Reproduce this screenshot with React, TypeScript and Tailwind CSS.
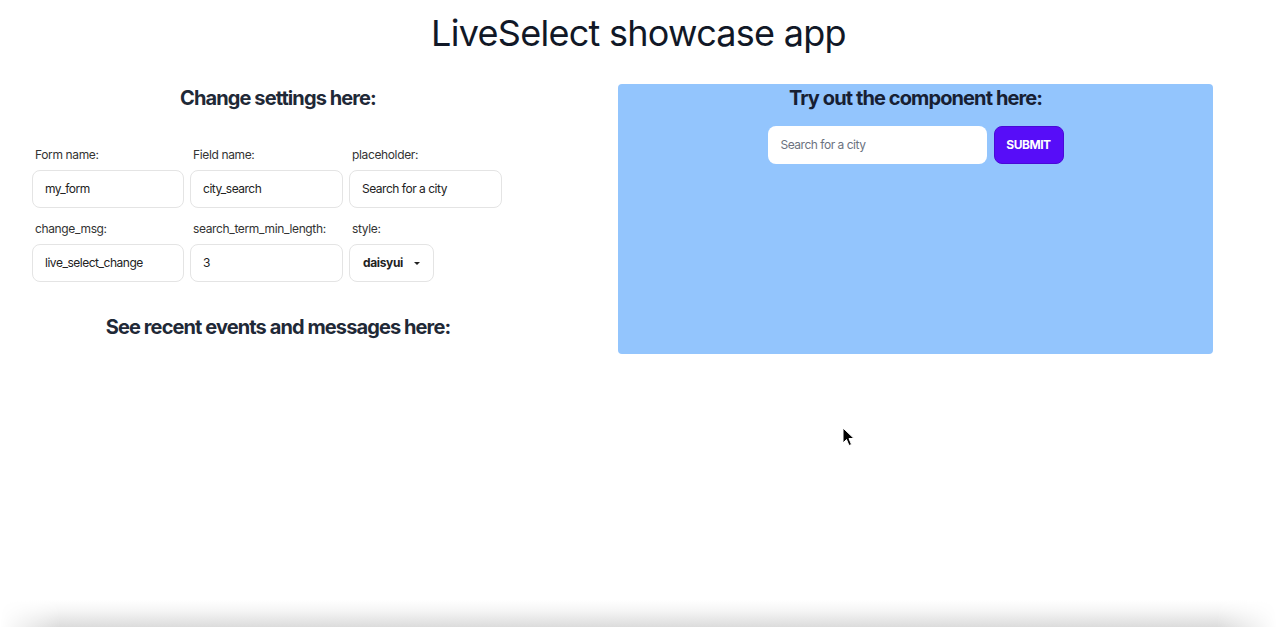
import React from "react";

function Field({ label, value, w }: { label: string; value: string; w: string }) {
  return (
    <div className={`flex flex-col ${w}`}>
      <label className="pl-[3px] text-xs leading-4 tracking-[-0.03em] text-[#333]">{label}</label>
      <div className="mt-[7px] flex h-[38px] items-center rounded-lg border border-[#e4e4e4] bg-white px-3 text-xs tracking-[-0.04em] text-[#222]">
        {value}
      </div>
    </div>
  );
}

export default function App() {
  return (
    <div className="relative flex h-[627px] w-full flex-col overflow-hidden bg-white font-['Inter',sans-serif] text-[#1f2937]">
      <h1 className="pt-[13px] text-center text-[36px] leading-10 tracking-[-0.02em] text-[#111827]">LiveSelect showcase app</h1>
      <div className="mt-[31px] flex flex-1">
        <div className="flex w-[556px] flex-col">
          <h2 className="text-center text-xl leading-7 font-bold tracking-[-0.045em]">Change settings here:</h2>
          <div className="mt-[35px] flex flex-col gap-[13px] pl-[32px]">
            <div className="flex gap-[6px]">
              <Field label="Form name:" value="my_form" w="w-[152px]" />
              <Field label="Field name:" value="city_search" w="w-[153px]" />
              <Field label="placeholder:" value="Search for a city" w="w-[153px]" />
            </div>
            <div className="flex gap-[6px]">
              <Field label="change_msg:" value="live_select_change" w="w-[152px]" />
              <Field label="search_term_min_length:" value="3" w="w-[153px]" />
              <div className="flex w-[85px] flex-col">
                <label className="pl-[3px] text-xs leading-4 tracking-[-0.03em] text-[#333]">style:</label>
                <div className="mt-[7px] flex h-[38px] items-center justify-between rounded-lg border border-[#e4e4e4] bg-white pr-[12px] pl-[13px] text-xs font-bold tracking-[-0.03em] text-[#222]">
                  <span>daisyui</span>
                  <svg width="8" height="5" viewBox="0 0 8 5"><path d="M1 1l3 3 3-3z" fill="#222" /></svg>
                </div>
              </div>
            </div>
          </div>
          <h2 className="mt-[31px] text-center text-xl leading-7 font-bold tracking-[-0.045em]">See recent events and messages here:</h2>
        </div>
        <div className="ml-[62px] flex h-[270px] w-[595px] flex-col items-center rounded-[4px] bg-[#93c5fd]">
          <h2 className="text-center text-xl leading-7 font-bold tracking-[-0.045em] text-[#172033]">Try out the component here:</h2>
          <div className="mt-[14px] flex gap-[7px]">
            <div className="flex h-[38px] w-[219px] items-center rounded-lg bg-white px-[13px] text-xs tracking-[-0.04em] text-[#6b7280]">Search for a city</div>
            <div className="flex h-[38px] w-[70px] items-center justify-center rounded-lg border border-[#4a0ad6] bg-[#570df8] text-xs font-bold tracking-[-0.04em] text-white">SUBMIT</div>
          </div>
        </div>
      </div>
      <div className="h-[27px] w-full bg-[linear-gradient(to_bottom,#ffffff,#f5f5f5_40%,#dcdcdc)] [mask-image:linear-gradient(to_right,transparent,black_60px,black_calc(100%-60px),transparent)]" />
      <svg className="absolute top-[427px] left-[842px]" width="14" height="20" viewBox="0 0 14 20">
        <path d="M1 1 L1 16 L4.5 12.5 L7 18.5 L9.5 17.5 L7 11.5 L12 11.5 Z" fill="#000" stroke="#fff" strokeWidth="1" />
      </svg>
    </div>
  );
}
